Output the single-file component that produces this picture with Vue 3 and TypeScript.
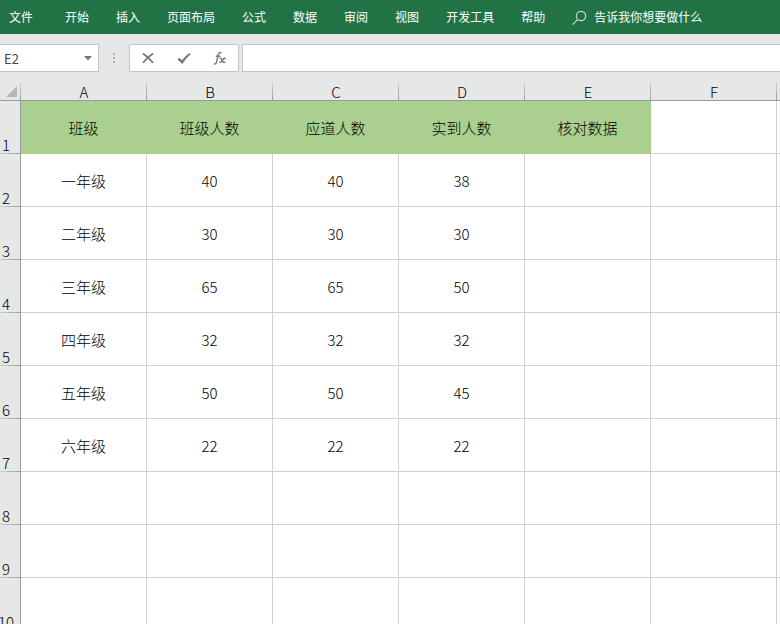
<script setup lang="ts">
import { ref } from 'vue'

const tabs: string[] = ['开始', '插入', '页面布局', '公式', '数据', '审阅', '视图', '开发工具', '帮助']
const columns: string[] = ['A', 'B', 'C', 'D', 'E', 'F']

const rows: (string | number)[][] = [
  ['班级', '班级人数', '应道人数', '实到人数', '核对数据', ''],
  ['一年级', 40, 40, 38, '', ''],
  ['二年级', 30, 30, 30, '', ''],
  ['三年级', 65, 65, 50, '', ''],
  ['四年级', 32, 32, 32, '', ''],
  ['五年级', 50, 50, 45, '', ''],
  ['六年级', 22, 22, 22, '', ''],
  ['', '', '', '', '', ''],
  ['', '', '', '', '', ''],
  ['', '', '', '', '', ''],
]

const cellName = ref('E2')
const formula = ref('')
</script>

<template>
  <div class="app">
    <nav class="ribbon">
      <button class="tab file" type="button">文件</button>
      <button v-for="tab in tabs" :key="tab" class="tab" type="button">{{ tab }}</button>
      <button class="tab tell" type="button">
        <svg class="search" viewBox="0 0 16 18" aria-hidden="true">
          <circle cx="9" cy="8" r="4.7" />
          <path d="M5.7 11.4 L.6 16.6" />
        </svg>
        告诉我你想要做什么
      </button>
    </nav>

    <div class="formula-bar">
      <div class="name-box">
        <input v-model="cellName" class="name-input" type="text" aria-label="名称框" />
        <button class="drop" type="button" aria-label="展开名称框">
          <svg viewBox="0 0 8 5" aria-hidden="true"><path d="M0 0h8L4 4.5z" /></svg>
        </button>
      </div>
      <svg class="grip" viewBox="0 0 2 12" aria-hidden="true">
        <path d="M0 1h2v2H0zM0 5h2v2H0zM0 9h2v2H0z" />
      </svg>
      <div class="actions">
        <button type="button" aria-label="取消">
          <svg viewBox="0 0 14 14" aria-hidden="true">
            <path class="stroke" d="M2 2.6 Q7 6 12 11.8 M12.2 2.6 Q6.5 6 2 11.8" />
          </svg>
        </button>
        <button type="button" aria-label="输入">
          <svg viewBox="0 0 14 14" aria-hidden="true">
            <path class="fill" d="M.4 8.4 L2.4 6.8 L5 9.2 Q8.4 4.8 12.4 2 L13.6 3.2 Q8.8 7.4 5.4 13 Z" />
          </svg>
        </button>
        <button type="button" aria-label="插入函数">
          <svg viewBox="0 0 14 14" aria-hidden="true">
            <path class="fx" d="M8.6 1.9 Q6.2 .5 5.2 3.8 L3.6 10.8 Q3 13.6 1 12.8 M2.8 5.2 H7.4" />
            <path class="fx" d="M6.6 7.4 Q8.4 6.6 9 8.6 L9.8 10.6 Q10.4 12 12.4 11 M12.8 7.4 Q11 6.8 9.4 9.4 Q8.2 11.8 6.4 11.2" />
          </svg>
        </button>
      </div>
      <input v-model="formula" class="formula-input" type="text" aria-label="编辑栏" />
    </div>

    <main class="sheet">
      <table class="grid">
        <colgroup>
          <col class="number-col" />
          <col v-for="c in columns" :key="c" class="data-col" />
          <col />
        </colgroup>
        <thead>
          <tr>
            <td class="corner">
              <svg viewBox="0 0 11 11" aria-hidden="true"><path d="M11 0v11H0z" /></svg>
            </td>
            <th v-for="c in columns" :key="c" scope="col">{{ c }}</th>
            <td class="rest"></td>
          </tr>
        </thead>
        <tbody>
          <tr v-for="(row, r) in rows" :key="r">
            <th scope="row"><span class="number">{{ r + 1 }}</span></th>
            <td v-for="(value, c) in row" :key="c" :class="{ title: r === 0 && c < 5 }">{{ value }}</td>
            <td></td>
          </tr>
        </tbody>
      </table>
    </main>
  </div>
</template>

<style>
body {
  margin: 0;
  background: #e6e8e7;
}
</style>

<style scoped>
.app {
  display: flex;
  flex-direction: column;
  height: 100vh;
  overflow: hidden;
  background: #e6e8e7;
  color: #000;
  font-family: 'Noto Sans CJK SC', sans-serif;
}

button,
input {
  margin: 0;
  padding: 0;
  border: 0;
  background: none;
  color: inherit;
  font: inherit;
}

svg {
  display: block;
}

.ribbon {
  display: flex;
  flex: none;
  gap: 27px;
  height: 34px;
  padding-left: 9px;
  background: #217346;
  color: #fff;
  font-size: 12px;
  line-height: 34px;
}

.tab {
  flex: none;
  white-space: nowrap;
}

.file {
  margin-right: 5px;
}

.tell {
  display: flex;
  align-items: center;
  gap: 6px;
}

.search {
  width: 16px;
  height: 18px;
  fill: none;
  stroke: #c3dccd;
  stroke-width: 1.2;
}

.formula-bar {
  display: flex;
  flex: none;
  align-items: center;
  height: 28px;
  padding: 10px 0 4px;
}

.name-box,
.actions,
.formula-input {
  box-sizing: border-box;
  height: 28px;
  border: 1px solid #c3c5c4;
  background: #fff;
}

.name-box {
  display: flex;
  flex: none;
  width: 99px;
  border-left: 0;
}

.name-input {
  flex: 1;
  min-width: 0;
  padding-left: 4px;
  color: #444;
  font-size: 13px;
}

.drop {
  display: flex;
  flex: none;
  align-items: center;
  justify-content: center;
  width: 20px;
}

.drop svg {
  width: 8px;
  height: 5px;
  fill: #777;
}

.grip {
  flex: none;
  width: 2px;
  height: 12px;
  margin: 0 14px;
  fill: #b0b2b1;
}

.actions {
  display: flex;
  flex: none;
  width: 110px;
  margin-right: 3px;
}

.actions button {
  display: flex;
  flex: 1;
  align-items: center;
  justify-content: center;
}

.actions svg {
  width: 14px;
  height: 14px;
}

.stroke,
.fx {
  fill: none;
  stroke: #7a7a7a;
  stroke-width: 1.8;
}

.fx {
  stroke-width: 1.5;
}

.fill {
  fill: #7a7a7a;
}

.formula-input {
  flex: 1;
  min-width: 0;
  border-right: 0;
  padding: 0 6px;
  font-size: 13px;
}

.sheet {
  flex: 1;
  min-height: 0;
  overflow: hidden;
}

.grid {
  width: 100%;
  table-layout: fixed;
  border-collapse: separate;
  border-spacing: 0;
  font-size: 15px;
  font-weight: 300;
  line-height: 16px;
}

.number-col {
  width: 21px;
}

.data-col {
  width: 126px;
}

th,
td {
  box-sizing: border-box;
  padding: 0;
  font-weight: inherit;
  text-align: center;
}

thead th,
thead td {
  height: 25px;
  border-bottom: 1px solid #999b9a;
  background: linear-gradient(#d4d6d5, #999b9a) right bottom / 1px 18px no-repeat;
  vertical-align: bottom;
}

thead .rest {
  background: none;
}

.corner svg {
  width: 11px;
  height: 11px;
  margin: 0 0 3px 6px;
  fill: #b5b7b6;
}

tbody th {
  height: 53px;
  border-right: 1px solid #999b9a;
  background: linear-gradient(to right, #cfd1d0, #999b9a) bottom / 100% 1px no-repeat;
  vertical-align: bottom;
}

.number {
  display: flex;
  justify-content: center;
  width: 12px;
  padding-bottom: 1px;
}

tbody td {
  height: 53px;
  padding-top: 2px;
  border-right: 1px solid #d0d0d0;
  border-bottom: 1px solid #d0d0d0;
  background: #fff;
}

tbody td:last-child {
  border-right: 0;
}

tbody .title {
  border-color: #a9d08e;
  background: #a9d08e;
}
</style>
